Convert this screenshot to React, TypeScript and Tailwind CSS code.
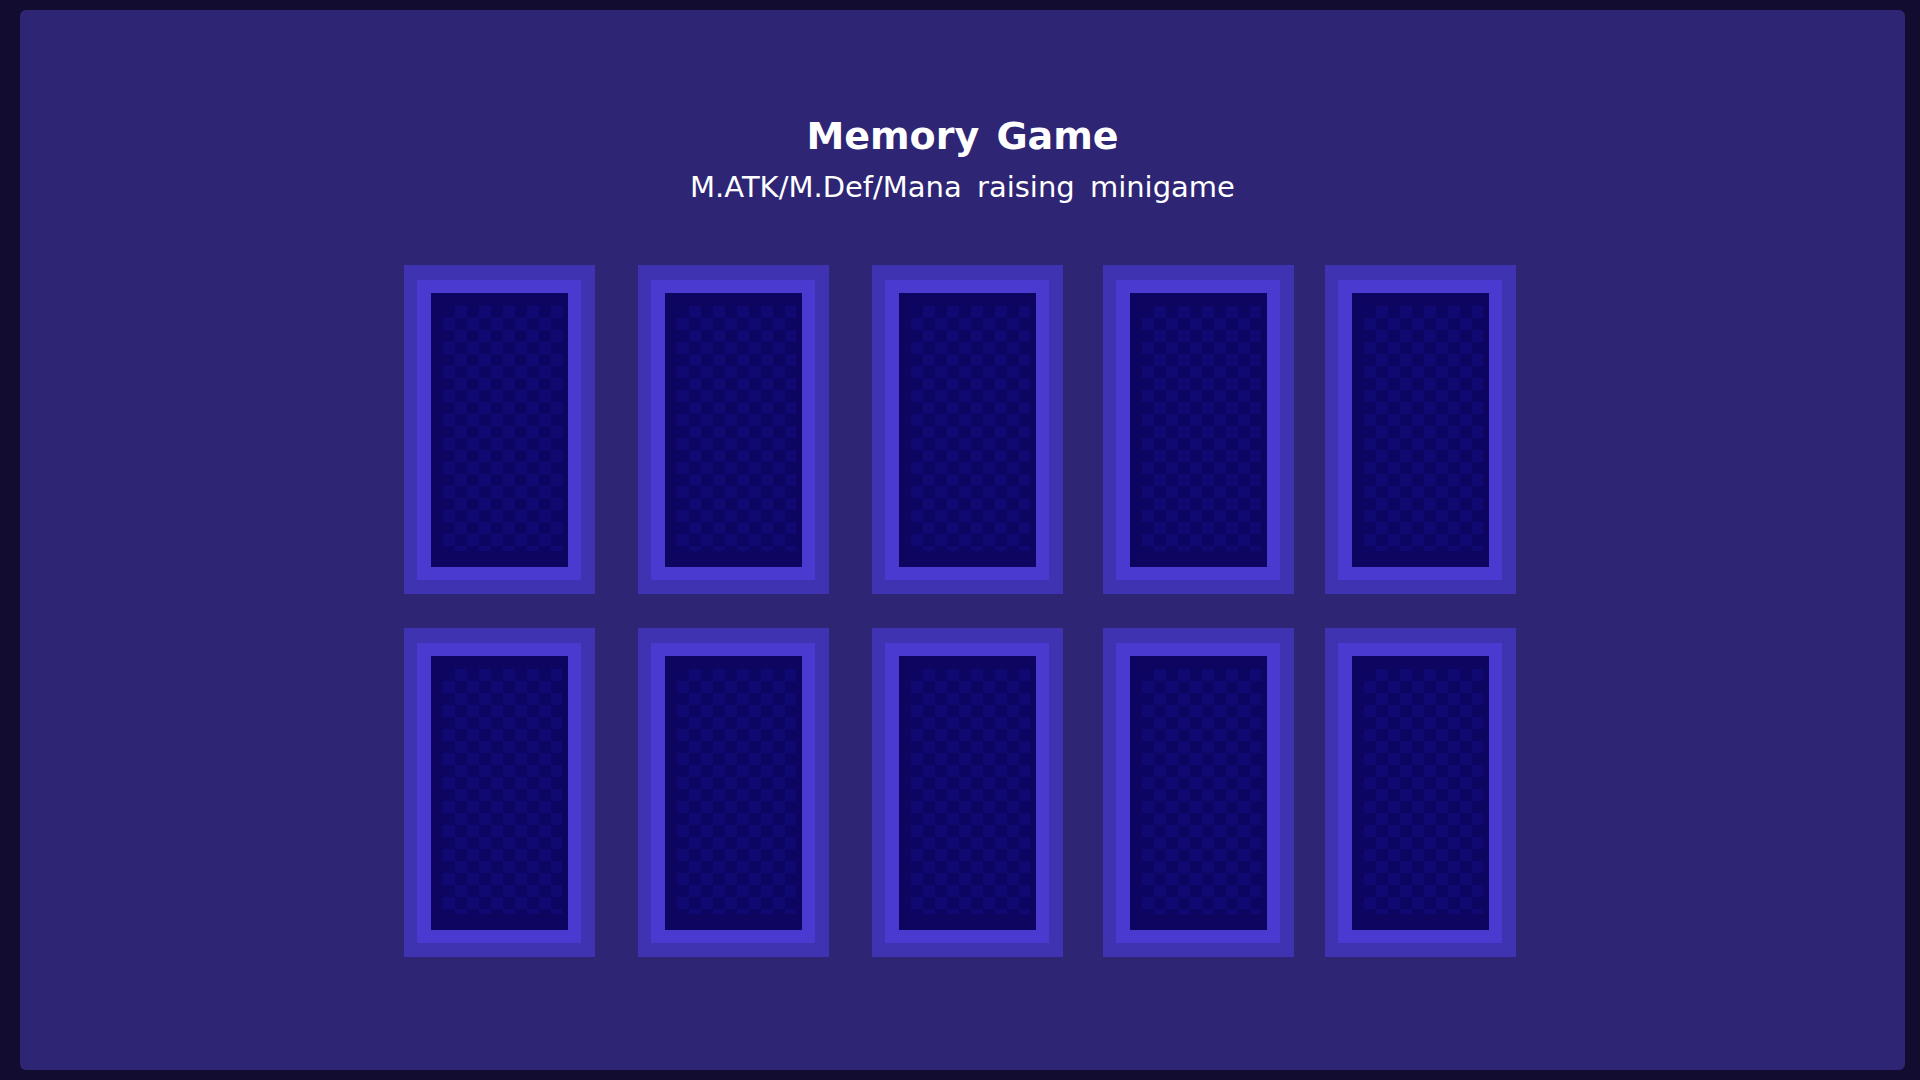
import React from "react";

const margins = ["ml-0", "ml-[43px]", "ml-[43px]", "ml-[40px]", "ml-[31px]"];

function Card() {
  return (
    <div className="w-[191px] h-[329px] bg-[#4033b2] pt-[15px] pl-[13px] pr-[14px] pb-[14px]">
      <div className="w-full h-full bg-[#4b3ad0] pt-[13px] pb-[13px] pl-[14px] pr-[13px]">
        <div className="w-full h-full bg-[#0d0560] pt-[13px] pb-[16px] pl-[12px] pr-[6px]">
          <div className="w-full h-full bg-[repeating-conic-gradient(#110972_0%_25%,#0d0562_0%_50%)] bg-[length:24px_24px]" />
        </div>
      </div>
    </div>
  );
}

export default function App() {
  return (
    <div className="w-[1920px] h-[1080px] bg-[#120d30] pt-[10px] pl-[20px] pr-[15px] pb-[10px]">
      <div className="w-full h-full bg-[#2e2574] rounded-[6px] flex flex-col items-center">
        <div
          className="mt-[104px] text-white text-[38px] leading-[44px] font-bold [word-spacing:4px]"
          style={{ fontFamily: '"DejaVu Sans", sans-serif' }}
        >
          Memory Game
        </div>
        <div
          className="mt-[12px] text-white text-[29px] leading-[34px] [word-spacing:6px]"
          style={{ fontFamily: '"DejaVu Sans", sans-serif' }}
        >
          M.ATK/M.Def/Mana raising minigame
        </div>
        <div className="mt-[61px] flex flex-col gap-[34px] ml-[-5px]">
          {[0, 1].map((r) => (
            <div key={r} className="flex">
              {margins.map((m, i) => (
                <div key={i} className={m}>
                  <Card />
                </div>
              ))}
            </div>
          ))}
        </div>
      </div>
    </div>
  );
}
